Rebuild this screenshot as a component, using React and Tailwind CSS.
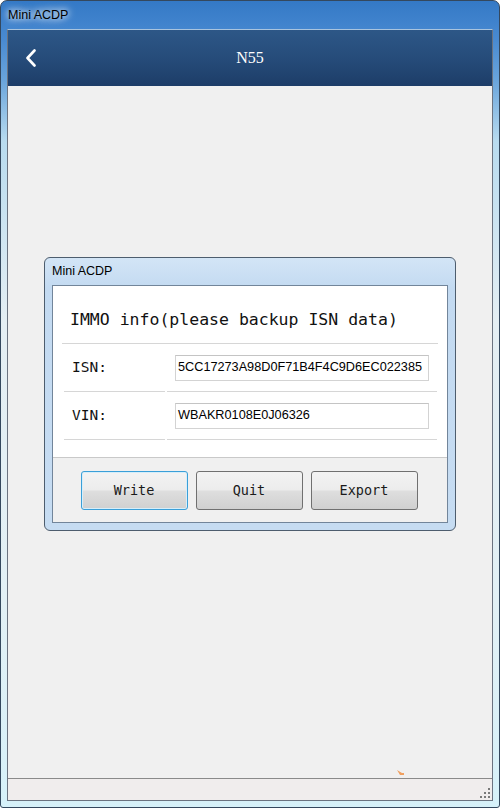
export default function App() {
  const btn =
    "w-[107px] h-[39px] rounded-[3px] border flex items-center justify-center text-[13.5px] text-[#1a1a1a] font-['DejaVu_Sans_Mono',monospace] bg-[linear-gradient(180deg,#f3f3f3_0%,#ececec_48%,#dedede_52%,#d0d0d0_100%)]";
  return (
    <div className="w-[500px] h-[808px] flex flex-col border border-[#34485e] rounded-t-[7px] rounded-b-[3px] overflow-hidden bg-[linear-gradient(180deg,#3479c6_0px,#4a8bd2_40px,#6aa5dc_80px,#b8dbef_140px,#e4eef3_320px,#e2f0f5_600px,#d6f1f9_100%)] font-['Liberation_Sans',Arial,sans-serif]">
      <div className="h-[28px] shrink-0 flex items-center pl-[7px] text-[12.5px] text-black [text-shadow:0_0_6px_#ffffff,0_0_10px_#ffffff]">
        Mini ACDP
      </div>
      <div className="mx-[6px] flex-1 flex flex-col border border-[#6b7380] border-t-[#a9c4de] min-h-0">
        <div className="h-[56px] shrink-0 grid grid-cols-[1fr_auto_1fr] items-center bg-[linear-gradient(180deg,#2d5787_0%,#264c7a_50%,#1d3d68_100%)]">
          <div className="pl-[17px] flex items-center">
            <svg width="12" height="18" viewBox="0 0 12 18">
              <polyline
                points="9.5,1.5 2.5,9 9.5,16.5"
                fill="none"
                stroke="#ffffff"
                strokeWidth="2.6"
                strokeLinecap="round"
                strokeLinejoin="round"
              />
            </svg>
          </div>
          <div className="text-white text-[16px] font-['Liberation_Serif',serif]">N55</div>
          <div />
        </div>
        <div className="flex-1 relative bg-[#f0f0f0] flex flex-col items-center pt-[171px]">
          <div className="w-[412px] h-[274px] shrink-0 flex flex-col border border-[#4d5d6e] rounded-[6px] px-[7px] pb-[7px] bg-[linear-gradient(180deg,#d3e5f6_0%,#c3daf1_30px,#c6dcf2_100%)]">
            <div className="h-[27px] shrink-0 flex items-center text-[12.5px] text-black">Mini ACDP</div>
            <div className="flex-1 flex flex-col border border-[#72859a] bg-white">
              <div className="h-[171px] flex flex-col">
                <div className="mx-[9px] h-[58px] border-b border-[#d6d6d6] pt-[24px] pl-[8px] text-[16.5px] leading-[20px] text-[#111] font-['DejaVu_Sans_Mono',monospace]">
                  IMMO info(please backup ISN data)
                </div>
                {[
                  ["ISN:", "5CC17273A98D0F71B4F4C9D6EC022385"],
                  ["VIN:", "WBAKR0108E0J06326"],
                ].map(([label, value]) => (
                  <div key={label} className="h-[48px] flex pl-[11px] pr-[10px] gap-[2px]">
                    <div className="w-[101px] border-b border-[#d6d6d6] flex items-center pl-[8px] text-[14.5px] text-[#111] font-['DejaVu_Sans_Mono',monospace]">
                      {label}
                    </div>
                    <div className="flex-1 border-b border-[#d6d6d6] px-[8px] pt-[11px]">
                      <div className="h-[26px] border border-[#d3d3d3] border-t-[#c4c4c4] flex items-center pl-[2px] text-[12.7px] text-black">
                        {value}
                      </div>
                    </div>
                  </div>
                ))}
              </div>
              <div className="flex-1 border-t border-[#c9c9c9] bg-[#f0f0f0] flex justify-center gap-[8px] pt-[13px] pr-[2px]">
                <div className={btn + " border-[#3a9fd8] shadow-[inset_0_0_0_1px_#d6eefa]"}>Write</div>
                <div className={btn + " border-[#707070]"}>Quit</div>
                <div className={btn + " border-[#707070]"}>Export</div>
              </div>
            </div>
          </div>
          <svg className="absolute left-[389px] top-[684px]" width="8" height="6" viewBox="0 0 8 6">
            <path d="M0 0 L5 3 L7 3 L7 5 L3 5 Z" fill="#f0a060" />
          </svg>
        </div>
        <div className="h-[22px] shrink-0 border-t border-[#8a8a8a] bg-[#f0eded] flex justify-end items-end pr-[2px] pb-[2px]">
          <svg width="10" height="10" viewBox="0 0 10 10">
            <rect x="8" y="0" width="2" height="2" fill="#7a7a7a" />
            <rect x="4" y="4" width="2" height="2" fill="#7a7a7a" />
            <rect x="8" y="4" width="2" height="2" fill="#7a7a7a" />
            <rect x="0" y="8" width="2" height="2" fill="#7a7a7a" />
            <rect x="4" y="8" width="2" height="2" fill="#7a7a7a" />
            <rect x="8" y="8" width="2" height="2" fill="#7a7a7a" />
          </svg>
        </div>
      </div>
      <div className="h-[6px] shrink-0" />
    </div>
  );
}
